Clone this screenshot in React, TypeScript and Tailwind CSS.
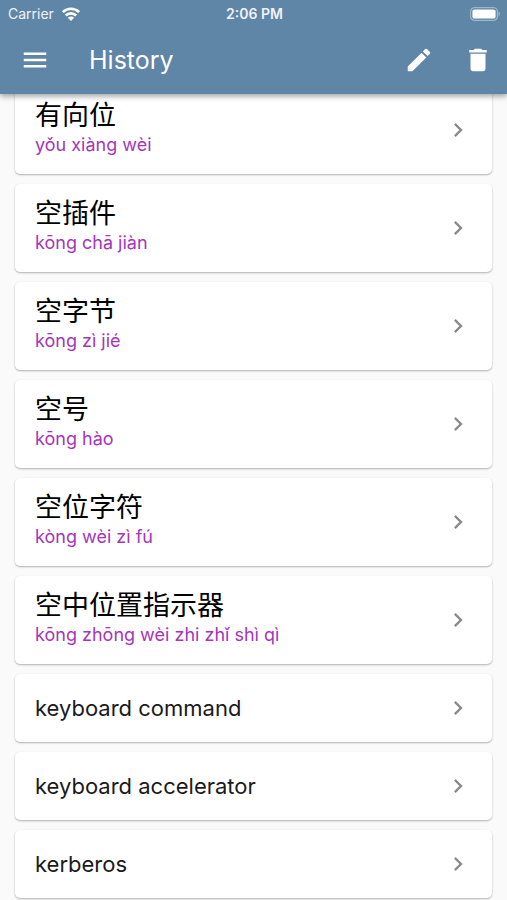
import { MdChevronRight, MdDelete, MdEdit, MdMenu } from "react-icons/md";

interface HistoryEntry {
    term: string;
    pinyin?: string;
}

const entries: HistoryEntry[] = [
    { term: "有向位", pinyin: "yǒu xiàng wèi" },
    { term: "空插件", pinyin: "kōng chā jiàn" },
    { term: "空字节", pinyin: "kōng zì jié" },
    { term: "空号", pinyin: "kōng hào" },
    { term: "空位字符", pinyin: "kòng wèi zì fú" },
    { term: "空中位置指示器", pinyin: "kōng zhōng wèi zhi zhǐ shì qì" },
    { term: "keyboard command" },
    { term: "keyboard accelerator" },
    { term: "kerberos" },
];

function WifiIcon() {
    return (
        <svg viewBox="0 0 18 14" className="w-[18px] h-[14px]" fill="none" stroke="white" strokeWidth="2.7">
            <path d="M0.9 5.1a11.5 11.5 0 0 1 16.2 0" />
            <path d="M3.8 8.5a7.4 7.4 0 0 1 10.4 0" />
            <path d="M9 13.9 5.8 10.8a4.5 4.5 0 0 1 6.4 0Z" fill="white" stroke="none" />
        </svg>
    );
}

function BatteryIcon() {
    return (
        <svg viewBox="0 0 31 14" className="w-[31px] h-[14px]">
            <rect x="0.6" y="0.6" width="26.8" height="12.8" rx="4" fill="none" stroke="white" strokeOpacity="0.4" strokeWidth="1.2" />
            <rect x="2.4" y="2.4" width="23.2" height="9.2" rx="2.2" fill="white" />
            <path d="M28.5 4.6c1.8 0.6 1.8 4.2 0 4.8Z" fill="white" fillOpacity="0.4" />
        </svg>
    );
}

function StatusBar() {
    return (
        <div className="grid grid-cols-3 items-center h-[28px] pl-2 pr-[6px] text-[14px] leading-[28px] text-white/90">
            <div className="flex items-center gap-2">
                <span>Carrier</span>
                <WifiIcon />
            </div>
            <span className="text-center font-semibold">2:06 PM</span>
            <div className="flex justify-end">
                <BatteryIcon />
            </div>
        </div>
    );
}

function HistoryCard({ term, pinyin }: HistoryEntry) {
    return (
        <li>
            <button
                className={`flex w-full items-center justify-between rounded-[5px] bg-white px-5 text-left shadow-[0_1px_2px_rgba(0,0,0,0.3)] ${pinyin ? "h-[88px]" : "h-[68px]"}`}
            >
                {pinyin ? (
                    <span className="flex flex-col pb-1">
                        <span lang="zh-CN" className="text-[27px] leading-[34px] text-black">{term}</span>
                        <span className="text-[18px] leading-[24px] text-[#a635bb]">{pinyin}</span>
                    </span>
                ) : (
                    <span className="text-[22px] leading-[34px] text-[#1a1a1a]">{term}</span>
                )}
                <MdChevronRight className="size-[28px] text-[#8a8a8a]" />
            </button>
        </li>
    );
}

export default function App() {
    return (
        <div className="min-h-screen bg-[#fafafa] font-['Inter','Noto_Sans_CJK_SC',sans-serif]">
            <header className="sticky top-0 z-10 bg-[#5f85a7] pb-[2px] text-white shadow-[0_2px_6px_rgba(0,0,0,0.4)]">
                <StatusBar />
                <div className="flex h-[64px] items-center pl-5 pr-[14px]">
                    <button aria-label="Open menu">
                        <MdMenu className="size-[30px]" />
                    </button>
                    <h1 className="ml-[39px] flex-1 text-[25px] leading-[34px] font-normal">History</h1>
                    <div className="flex gap-[29px]">
                        <button aria-label="Edit history">
                            <MdEdit className="size-[30px]" />
                        </button>
                        <button aria-label="Delete history">
                            <MdDelete className="size-[30px]" />
                        </button>
                    </div>
                </div>
            </header>

            <main className="-mt-2 px-[15px]">
                <ul className="flex flex-col gap-[10px]">
                    {entries.map((entry) => (
                        <HistoryCard key={entry.term} {...entry} />
                    ))}
                </ul>
            </main>
        </div>
    );
}
